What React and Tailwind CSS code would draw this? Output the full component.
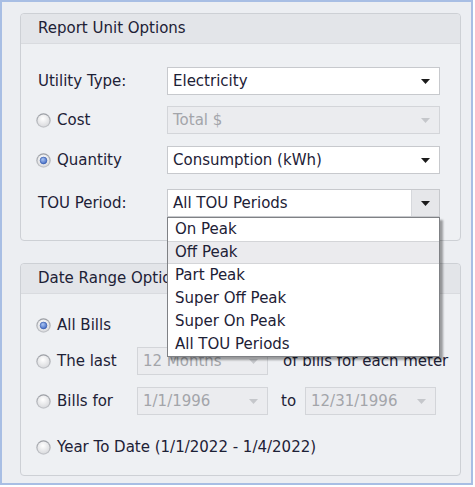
import React from 'react';

function Caret({ disabled }) {
  return (
    <svg width="9" height="5" viewBox="0 0 9 5">
      <path d="M0 0h9L4.5 5z" fill={disabled ? '#c5c7cb' : '#1b1b1b'} />
    </svg>
  );
}

function Radio({ checked }) {
  return (
    <svg width="15" height="15" viewBox="0 0 15 15" className="shrink-0">
      <defs>
        <linearGradient id="rOuter" x1="0" y1="0" x2="0" y2="1">
          <stop offset="0" stopColor="#9a9da3" />
          <stop offset="1" stopColor="#c4c6ca" />
        </linearGradient>
        <radialGradient id="rInner" cx="0.45" cy="0.35" r="0.7">
          <stop offset="0" stopColor="#ffffff" />
          <stop offset="1" stopColor="#d8d9dc" />
        </radialGradient>
        <radialGradient id="rDot" cx="0.4" cy="0.35" r="0.7">
          <stop offset="0" stopColor="#a9c4f2" />
          <stop offset="1" stopColor="#3d66c2" />
        </radialGradient>
      </defs>
      <circle cx="7.5" cy="7.5" r="7.2" fill="url(#rOuter)" />
      <circle cx="7.5" cy="7.5" r="6" fill="url(#rInner)" />
      {checked && <circle cx="7.5" cy="7.5" r="3.4" fill="url(#rDot)" stroke="#2f55a8" strokeWidth="0.6" />}
    </svg>
  );
}

function Combo({ value, disabled, pressed, className = '', children }) {
  return (
    <div
      className={`relative flex items-center h-[28px] border ${
        disabled ? 'bg-[#ebecef] border-[#d3d5d9] text-[#a3a5aa]' : 'bg-white border-[#c7c9cd]'
      } ${className}`}
    >
      <span className="flex-1 pl-[5px] truncate">{value}</span>
      {pressed ? (
        <span className="flex items-center justify-center w-[28px] h-full bg-[#e6e7ea] border-l border-[#d6d8dc]">
          <Caret />
        </span>
      ) : (
        <span className="flex items-center justify-center w-[28px] h-full">
          <Caret disabled={disabled} />
        </span>
      )}
      {children}
    </div>
  );
}

function Group({ title, className = '', children }) {
  return (
    <div className={`w-[441px] border border-[#cdd0d5] rounded-[4px] bg-[#eef0f3] ${className}`}>
      <div className="flex items-center h-[30px] pl-[17px] bg-[#e3e5e9] border-b border-[#d9dbdf] rounded-t-[4px] whitespace-nowrap overflow-hidden">
        {title}
      </div>
      {children}
    </div>
  );
}

const tou = ['On Peak', 'Off Peak', 'Part Peak', 'Super Off Peak', 'Super On Peak', 'All TOU Periods'];

export default function App() {
  return (
    <div className="w-[475px] h-[487px] bg-white font-['DejaVu_Sans',Verdana,sans-serif] text-[15px] text-[#1d2136]">
      <div className="w-[473px] h-[485px] border-2 border-[#a8bee4] bg-[#eceef2] pl-[18px] pt-[11px]">
        <Group title="Report Unit Options" className="relative z-10 h-[228px]">
          <div className="pl-[15px]">
            <div className="flex items-center mt-[23px]">
              <div className="w-[131px] pl-[2px]">Utility Type:</div>
              <Combo value="Electricity" className="w-[273px]" />
            </div>
            <div className="flex items-center mt-[11px]">
              <div className="w-[131px] flex items-center gap-[6px]">
                <Radio />
                <span>Cost</span>
              </div>
              <Combo value="Total $" disabled className="w-[273px]" />
            </div>
            <div className="flex items-center mt-[12px]">
              <div className="w-[131px] flex items-center gap-[6px]">
                <Radio checked />
                <span>Quantity</span>
              </div>
              <Combo value="Consumption (kWh)" className="w-[273px]" />
            </div>
            <div className="flex items-center mt-[15px]">
              <div className="w-[131px] pl-[2px]">TOU Period:</div>
              <Combo value="All TOU Periods" pressed className="w-[273px]">
                <div className="absolute left-[-1px] top-[27px] w-[273px] bg-white border border-[#7f8185] shadow-[3px_3px_2px_rgba(0,0,0,0.35)]">
                  {tou.map((t) => (
                    <div
                      key={t}
                      className={`flex items-center h-[23px] pl-[7px] ${
                        t === 'Off Peak' ? 'bg-[#ebebee] border-y border-[#d4d5d8]' : ''
                      }`}
                    >
                      {t}
                    </div>
                  ))}
                </div>
              </Combo>
            </div>
          </div>
        </Group>

        <Group title="Date Range Options" className="mt-[22px] h-[213px]">
          <div className="pl-[15px]">
            <div className="flex items-center h-[28px] mt-[17px] gap-[6px]">
              <Radio checked />
              <span>All Bills</span>
            </div>
            <div className="flex items-center mt-[8px]">
              <div className="w-[101px] flex items-center gap-[6px]">
                <Radio />
                <span>The last</span>
              </div>
              <Combo value="12 Months" disabled className="w-[131px]" />
              <span className="ml-[15px] whitespace-nowrap">of bills for each meter</span>
            </div>
            <div className="flex items-center mt-[12px]">
              <div className="w-[101px] flex items-center gap-[6px]">
                <Radio />
                <span>Bills for</span>
              </div>
              <Combo value="1/1/1996" disabled className="w-[131px]" />
              <span className="ml-[13px] w-[24px]">to</span>
              <Combo value="12/31/1996" disabled className="w-[131px]" />
            </div>
            <div className="flex items-center h-[28px] mt-[18px] gap-[6px]">
              <Radio />
              <span>Year To Date (1/1/2022 - 1/4/2022)</span>
            </div>
          </div>
        </Group>
      </div>
    </div>
  );
}
